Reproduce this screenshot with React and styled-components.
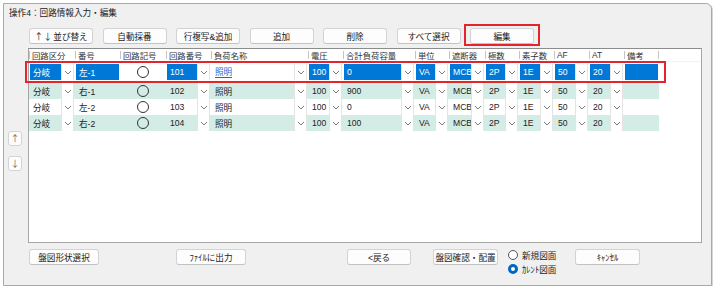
import styled, { createGlobalStyle } from "styled-components";

const GlobalStyle = createGlobalStyle`
  html, body {
    margin: 0;
    padding: 0;
    background: #ffffff;
  }
  body {
    font-family: "Liberation Sans", "Noto Sans CJK JP", sans-serif;
    color: #1a1a1a;
  }
`;

const COLS = [
  { key: "kubun", label: "回路区分", w: 46, dd: true },
  { key: "no", label: "番号", w: 45 },
  { key: "sym", label: "回路記号", w: 46 },
  { key: "cno", label: "回路番号", w: 45, dd: true },
  { key: "name", label: "負荷名称", w: 97, dd: true },
  { key: "v", label: "電圧", w: 35, dd: true },
  { key: "cap", label: "合計負荷容量", w: 72, dd: true },
  { key: "unit", label: "単位", w: 34, dd: true },
  { key: "brk", label: "遮断器", w: 36, dd: true },
  { key: "pole", label: "極数", w: 34, dd: true },
  { key: "elem", label: "素子数", w: 35, dd: true },
  { key: "af", label: "AF", w: 35, dd: true },
  { key: "at", label: "AT", w: 35, dd: true },
  { key: "note", label: "備考", w: 35 },
];

const base = {
  kubun: "分岐",
  sym: true,
  name: "照明",
  v: "100",
  unit: "VA",
  brk: "MCB",
  pole: "2P",
  elem: "1E",
  af: "50",
  at: "20",
  note: "",
};

const rows = [
  { ...base, no: "左-1", cno: "101", cap: "0" },
  { ...base, no: "右-1", cno: "102", cap: "900" },
  { ...base, no: "左-2", cno: "103", cap: "0" },
  { ...base, no: "右-2", cno: "104", cap: "100" },
];

function Chevron() {
  return (
    <svg width="8" height="5" viewBox="0 0 8 5">
      <path d="M1 1 L4 4 L7 1" fill="none" stroke="#7a7a7a" strokeWidth="1" />
    </svg>
  );
}

export default function App() {
  return (
    <>
      <GlobalStyle />
      <Panel>
        <Title>操作4：回路情報入力・編集</Title>
        <Toolbar>
          <Btn>
            <Arrow>↑↓</Arrow>並び替え
          </Btn>
          <Btn>自動採番</Btn>
          <Btn>行複写&amp;追加</Btn>
          <Btn>追加</Btn>
          <Btn>削除</Btn>
          <Btn>すべて選択</Btn>
          <Btn $marked>編集</Btn>
        </Toolbar>
        <Main>
          <Arrows>
            <ArrowBtn>↑</ArrowBtn>
            <ArrowBtn>↓</ArrowBtn>
          </Arrows>
          <Grid>
            <HeaderRow>
              {COLS.map((c) => (
                <HeadCell key={c.key} $w={c.w}>
                  {c.label}
                </HeadCell>
              ))}
            </HeaderRow>
            {rows.map((r, i) => (
              <Row key={i} $sel={i === 0} $alt={i % 2 === 1}>
                {COLS.map((c) => (
                  <Cell key={c.key} $w={c.w}>
                    {c.key === "sym" ? (
                      <Symbol>
                        <Circle />
                      </Symbol>
                    ) : (
                      <Value $sel={i === 0 && c.key !== "name"}>
                        {i === 0 && c.key === "name" ? (
                          <SelText>{r[c.key]}</SelText>
                        ) : (
                          r[c.key]
                        )}
                      </Value>
                    )}
                    {c.dd && (
                      <DropBtn>
                        <Chevron />
                      </DropBtn>
                    )}
                  </Cell>
                ))}
              </Row>
            ))}
          </Grid>
        </Main>
        <Footer>
          <Btn $w={70}>盤図形状選択</Btn>
          <Btn $w={70} $ml={77}>
            ﾌｧｲﾙに出力
          </Btn>
          <Btn $w={64} $ml={101}>
            &lt;戻る
          </Btn>
          <Btn $w={65} $ml={22}>
            盤図確認・配置
          </Btn>
          <RadioGroup>
            <RadioLabel>
              <Radio />
              新規図面
            </RadioLabel>
            <RadioLabel>
              <Radio $on />
              ｶﾚﾝﾄ図面
            </RadioLabel>
          </RadioGroup>
          <Btn $w={65}>ｷｬﾝｾﾙ</Btn>
        </Footer>
      </Panel>
    </>
  );
}

// --------------------------css

const Panel = styled.div`
  margin: 3px 0 0 3px;
  width: 707px;
  height: 281px;
  background: #f0f0f0;
  border: 1px solid #a9a9a9;
  border-top-right-radius: 6px;
  display: flex;
  flex-direction: column;
  box-shadow: 1px 1px 0 #d6d6d6;
`;

const Title = styled.div`
  height: 18px;
  line-height: 18px;
  padding-left: 5px;
  font-size: 8.6px;
  color: #222;
`;

const Toolbar = styled.div`
  display: flex;
  gap: 9.5px;
  margin-top: 6px;
  padding-left: 25px;
  height: 16px;
`;

const Btn = styled.div`
  position: relative;
  box-sizing: border-box;
  width: ${(p) => p.$w || 64}px;
  margin-left: ${(p) => p.$ml || 0}px;
  height: 16px;
  flex-shrink: 0;
  background: #fdfdfd;
  border: 1px solid #d3d3d3;
  border-bottom-color: #c2c2c2;
  border-radius: 3px;
  display: flex;
  align-items: center;
  justify-content: center;
  font-size: 8.6px;
  color: #1a1a1a;
  white-space: nowrap;

  ${(p) =>
    p.$marked &&
    `
    &::after {
      content: "";
      position: absolute;
      left: -7px;
      right: -7px;
      top: -5px;
      bottom: -3px;
      border: 2px solid #e3262b;
    }
  `}
`;

const Arrow = styled.span`
  font-family: "Noto Sans CJK JP", sans-serif;
  font-size: 9px;
  color: #333;
  margin-right: 1px;
`;

const Main = styled.div`
  display: flex;
  margin-top: 4px;
  padding-left: 4px;
  gap: 6px;
`;

const Arrows = styled.div`
  width: 14px;
  display: flex;
  flex-direction: column;
  gap: 10px;
  padding-top: 83px;
`;

const ArrowBtn = styled.div`
  box-sizing: border-box;
  width: 14px;
  height: 15px;
  background: #fdfdfd;
  border: 1px solid #d3d3d3;
  border-radius: 3px;
  display: flex;
  align-items: center;
  justify-content: center;
  font-family: "Noto Sans CJK JP", sans-serif;
  font-size: 9px;
  color: #6a6a6a;
`;

const Grid = styled.div`
  box-sizing: border-box;
  width: 674px;
  height: 195px;
  background: #ffffff;
  border: 1px solid #a6a6a6;
  border-top-color: #8c8c8c;
  display: flex;
  flex-direction: column;
`;

const HeaderRow = styled.div`
  display: flex;
  height: 12px;
  border-bottom: 1px solid #f2f2f2;
`;

const HeadCell = styled.div`
  box-sizing: border-box;
  width: ${(p) => p.$w}px;
  display: flex;
  align-items: center;
  padding-left: 3px;
  font-size: 8.4px;
  color: #333;
  white-space: nowrap;
  overflow: hidden;
  position: relative;

  &::before {
    content: "";
    position: absolute;
    left: 0;
    top: 2px;
    height: 8px;
    width: 1px;
    background: #c4c4c4;
  }
  &:last-child::after {
    content: "";
    position: absolute;
    right: 0;
    top: 2px;
    height: 8px;
    width: 1px;
    background: #c4c4c4;
  }
`;

const Row = styled.div`
  position: relative;
  display: flex;
  width: 630px;
  height: 16px;
  background: ${(p) => (p.$alt ? "#d4ece6" : "#ffffff")};
  margin: ${(p) => (p.$sel ? "2px 0 3px" : "0")};

  ${(p) =>
    p.$sel &&
    `
    &::after {
      content: "";
      position: absolute;
      left: -4px;
      right: -7px;
      top: -3px;
      bottom: -3px;
      border: 2px solid #e3262b;
      pointer-events: none;
    }
  `}
`;

const Cell = styled.div`
  box-sizing: border-box;
  width: ${(p) => p.$w}px;
  display: flex;
  align-items: stretch;
  padding: 0 1px 0 1px;
`;

const Value = styled.div`
  flex: 1;
  display: flex;
  align-items: center;
  padding-left: 3px;
  font-size: 8.6px;
  white-space: nowrap;
  overflow: hidden;
  background: ${(p) => (p.$sel ? "#0078d7" : "transparent")};
  color: ${(p) => (p.$sel ? "#ffffff" : "#222")};
`;

const SelText = styled.span`
  color: #2a62c9;
  border-bottom: 1px solid #2a62c9;
  line-height: 10px;
`;

const DropBtn = styled.div`
  box-sizing: border-box;
  width: 13px;
  background: #ffffff;
  border-left: 1px solid #e4e4e4;
  border-right: 1px solid #e4e4e4;
  display: flex;
  align-items: center;
  justify-content: center;
`;

const Symbol = styled.div`
  flex: 1;
  display: flex;
  align-items: center;
  justify-content: center;
`;

const Circle = styled.div`
  width: 10px;
  height: 10px;
  border: 1px solid #333;
  border-radius: 50%;
`;

const Footer = styled.div`
  display: flex;
  align-items: flex-start;
  margin-top: 6px;
  padding-left: 25px;
`;

const RadioGroup = styled.div`
  display: flex;
  flex-direction: column;
  gap: 4px;
  margin-left: 10px;
  margin-right: 15px;
  padding-top: 1px;
  width: 52px;
`;

const RadioLabel = styled.div`
  display: flex;
  align-items: center;
  gap: 4px;
  font-size: 8.6px;
  height: 10px;
  white-space: nowrap;
  color: #222;
`;

const Radio = styled.span`
  box-sizing: border-box;
  width: 10px;
  height: 10px;
  border-radius: 50%;
  border: ${(p) => (p.$on ? "3px solid #0067c0" : "1px solid #555")};
  background: #ffffff;
  flex-shrink: 0;
`;
